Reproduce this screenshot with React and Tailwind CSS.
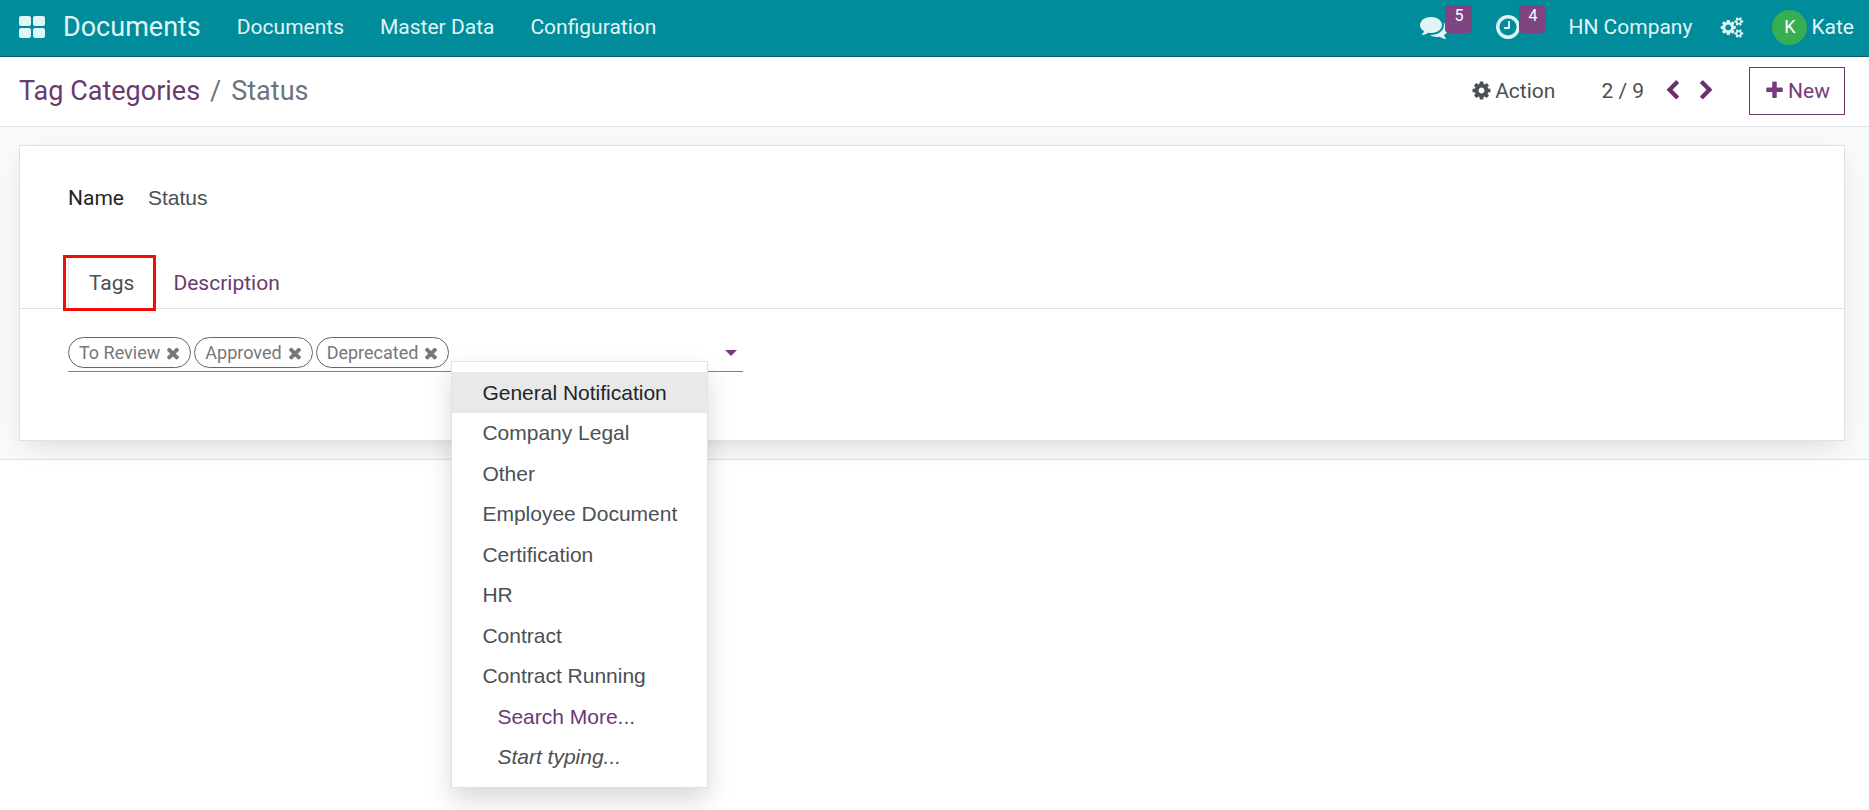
import { useState } from 'react';

const ICONS = {
  cog: 'M1152 896q0-106-75-181t-181-75-181 75-75 181 75 181 181 75 181-75 75-181zm512-109v222q0 12-8 23t-20 13l-185 28q-19 54-39 91 35 50 107 138 10 12 10 25t-9 23q-27 37-99 108t-94 71q-12 0-26-9l-138-108q-44 23-91 38-16 136-29 186-7 28-36 28h-222q-14 0-24.5-8.5t-11.5-21.5l-28-184q-49-16-90-37l-141 107q-10 9-25 9-14 0-25-11-126-114-165-168-7-10-7-23 0-12 8-23 15-21 51-66.5t54-70.5q-27-50-41-99l-183-27q-13-2-21-12.5t-8-23.5v-222q0-12 8-23t19-13l186-28q14-46 39-92-40-57-107-138-10-12-10-24 0-10 9-23 26-36 98.5-107.5t94.5-71.5q13 0 26 10l138 107q44-23 91-38 16-136 29-186 7-28 36-28h222q14 0 24.5 8.5t11.5 21.5l28 184q49 16 90 37l142-107q9-9 24-9 13 0 25 10 129 119 165 170 7 8 7 22 0 12-8 23-15 21-51 66.5t-54 70.5q26 50 41 98l183 28q13 2 21 12.5t8 23.5z',
  cogs: 'M896 896q0-106-75-181t-181-75-181 75-75 181 75 181 181 75 181-75 75-181zm768 512q0-52-38-90t-90-38-90 38-38 90q0 53 37.5 90.5t90.5 37.5 90.5-37.5 37.5-90.5zm0-1024q0-52-38-90t-90-38-90 38-38 90q0 53 37.5 90.5t90.5 37.5 90.5-37.5 37.5-90.5zm-384 421v185q0 10-7 19.5t-16 10.5l-155 24q-11 35-32 76 34 48 90 115 7 11 7 20 0 12-7 19-23 30-82.5 89.5t-78.5 59.5q-11 0-21-7l-115-90q-37 19-77 31-11 108-23 155-7 24-30 24h-186q-11 0-20-7.5t-10-17.5l-23-153q-34-10-75-31l-118 89q-7 7-20 7-11 0-21-8-144-133-144-160 0-9 7-19 10-14 41-53t47-61q-23-44-35-82l-152-24q-10-1-17-9.5t-7-19.5v-185q0-10 7-19.5t16-10.5l155-24q11-35 32-76-34-48-90-115-7-11-7-20 0-12 7-20 22-30 82-89t79-59q11 0 21 7l115 90q34-18 77-32 11-108 23-154 7-24 30-24h186q11 0 20 7.5t10 17.5l23 153q34 10 75 31l118-89q8-7 20-7 11 0 21 8 144 133 144 160 0 8-7 19-12 16-42 54t-45 60q23 48 34 82l152 23q10 2 17 10.5t7 19.5zm640 533v140q0 16-149 31-12 27-30 52 51 113 51 138 0 4-4 7-122 71-124 71-8 0-46-47t-52-68q-20 2-30 2t-30-2q-14 21-52 68t-46 47q-2 0-124-71-4-3-4-7 0-25 51-138-18-25-30-52-149-15-149-31v-140q0-16 149-31 13-29 30-52-51-113-51-138 0-4 4-7 4-2 35-20t59-34 30-16q8 0 46 46.5t52 67.5q20-2 30-2t30 2q51-71 92-112l6-2q4 0 124 70 4 3 4 7 0 25-51 138 17 23 30 52 149 15 149 31zm0-1024v140q0 16-149 31-12 27-30 52 51 113 51 138 0 4-4 7-122 71-124 71-8 0-46-47t-52-68q-20 2-30 2t-30-2q-14 21-52 68t-46 47q-2 0-124-71-4-3-4-7 0-25 51-138-18-25-30-52-149-15-149-31v-140q0-16 149-31 13-29 30-52-51-113-51-138 0-4 4-7 4-2 35-20t59-34 30-16q8 0 46 46.5t52 67.5q20-2 30-2t30 2q51-71 92-112l6-2q4 0 124 70 4 3 4 7 0 25-51 138 17 23 30 52 149 15 149 31z',
  plus: 'M1600 736v192q0 40-28 68t-68 28h-416v416q0 40-28 68t-68 28h-192q-40 0-68-28t-28-68v-416h-416q-40 0-68-28t-28-68v-192q0-40 28-68t68-28h416v-416q0-40 28-68t68-28h192q40 0 68 28t28 68v416h416q40 0 68 28t28 68z',
  times: 'M1490 1322q0 40-28 68l-136 136q-28 28-68 28t-68-28l-294-294-294 294q-28 28-68 28t-68-28l-136-136q-28-28-28-68t28-68l294-294-294-294q-28-28-28-68t28-68l136-136q28-28 68-28t68 28l294 294 294-294q28-28 68-28t68 28l136 136q28 28 28 68t-28 68l-294 294 294 294q28 28 28 68z',
  left: 'M1427 301l-531 531 531 531q19 19 19 45t-19 45l-166 166q-19 19-45 19t-45-19l-742-742q-19-19-19-45t19-45l742-742q19-19 45-19t45 19l166 166q19 19 19 45t-19 45z',
  right: 'M1363 877l-742 742q-19 19-45 19t-45-19l-166-166q-19-19-19-45t19-45l531-531-531-531q-19-19-19-45t19-45l166-166q19-19 45-19t45 19l742 742q19 19 19 45t-19 45z',
  comments: 'M1408 768q0 139-94 257t-256.5 186.5-353.5 68.5q-86 0-176-16-124 88-278 128-36 9-86 16h-3q-11 0-20.5-8t-11.5-21q-1-3-1-6.5t.5-6.5 2-6l2.5-5 3.5-5.5 4-5 4.5-5 4-4.5q5-6 23-25t26-29.5 22.5-29 25-38.5 20.5-44q-124-72-195-177t-71-224q0-139 94-257t256.5-186.5 353.5-68.5 353.5 68.5 256.5 186.5 94 257zm384 256q0 120-71 224.5t-195 176.5q10 24 20.5 44t25 38.5 22.5 29 26 29.5 23 25q1 1 4 4.5t4.5 5 4 5 3.5 5.5l2.5 5 2 6 .5 6.5-1 6.5q-3 14-13 22t-22 7q-50-7-86-16-154-40-278-128-90 16-176 16-271 0-472-132 58 4 88 4 161 0 309-45t264-129q125-92 192-212t67-254q0-77-23-152 129 71 204 178t75 230z',
  clock: 'M1024 544v448q0 14-9 23t-23 9h-320q-14 0-23-9t-9-23v-64q0-14 9-23t23-9h224v-352q0-14 9-23t23-9h64q14 0 23 9t9 23zm416 352q0-148-73-273t-198-198-273-73-273 73-198 198-73 273 73 273 198 198 273 73 273-73 198-198 73-273zm224 0q0 209-103 385.5t-279.5 279.5-385.5 103-385.5-103-279.5-279.5-103-385.5 103-385.5 279.5-279.5 385.5-103 385.5 103 279.5 279.5 103 385.5z',
};

const MENUS = ['Documents', 'Master Data', 'Configuration'];

const OPTIONS = [
  'General Notification',
  'Company Legal',
  'Other',
  'Employee Document',
  'Certification',
  'HR',
  'Contract',
  'Contract Running',
];

function Icon({ name, viewBox = '0 0 1792 1792', className }) {
  return (
    <svg viewBox={viewBox} className={className} fill="currentColor" aria-hidden="true">
      <path d={ICONS[name]} />
    </svg>
  );
}

function Systray({ icon, count, label }) {
  return (
    <button aria-label={label} className="relative flex h-8 w-7 items-center">
      <Icon name={icon} className="h-7 w-7" />
      <span className="absolute -top-[6px] left-[25px] flex h-7 w-[27px] items-center justify-center rounded-sm bg-[#7e4582] pb-[6px] text-base leading-5 text-white">
        {count}
      </span>
    </button>
  );
}

function Navbar() {
  return (
    <header className="flex h-[57px] items-center border-b border-[#0b5f69] bg-[#008c9b] pr-[15px] pb-[2px] pl-[19px] text-[#e0f5f6]">
      <button aria-label="Apps" className="shrink-0">
        <svg viewBox="0 0 26 22" className="h-[22px] w-[26px]" fill="currentColor">
          <rect width="12" height="10" rx="2" />
          <rect x="14" width="12" height="10" rx="2" />
          <rect y="12" width="12" height="10" rx="2" />
          <rect x="14" y="12" width="12" height="10" rx="2" />
        </svg>
      </button>
      <a href="#home" className="ml-[18px] text-[27px] leading-8">Documents</a>
      <nav className="ml-[18px] flex">
        {MENUS.map((menu) => (
          <a key={menu} href="#menu" className="px-[18px] leading-8">{menu}</a>
        ))}
      </nav>
      <div className="ml-auto flex items-center">
        <Systray icon="comments" count="5" label="Messages" />
        <div className="ml-[46px]">
          <Systray icon="clock" count="4" label="Activities" />
        </div>
        <button className="ml-[46px] leading-8">HN Company</button>
        <button aria-label="Settings" className="ml-7">
          <Icon name="cogs" viewBox="0 0 1920 1792" className="h-[21px] w-6" />
        </button>
        <button className="ml-7 flex items-center gap-1 leading-8">
          <span className="flex h-[35px] w-[35px] items-center justify-center rounded-full bg-[#37ad54] text-lg text-white">K</span>
          Kate
        </button>
      </div>
    </header>
  );
}

function ControlPanel() {
  return (
    <div className="flex h-[70px] items-center border-b border-[#dee2e6] bg-white pr-6 pb-[2px] pl-[19px] text-[#495057]">
      <ol className="flex text-[27px] leading-8">
        <li><a href="#categories" className="text-[#6b3a6e]">Tag Categories</a></li>
        <li className="px-[10px] text-[#6c757d]">/</li>
        <li className="text-[#6c757d]">Status</li>
      </ol>
      <div className="ml-auto flex items-center leading-8">
        <button className="flex items-center gap-[3px]">
          <Icon name="cog" className="h-[21px] w-[21px]" />
          Action
        </button>
        <span className="ml-[46px]">2 / 9</span>
        <button aria-label="Previous" className="ml-[18px] text-[#6b2f6c]">
          <Icon name="left" className="h-[21px] w-[21px]" />
        </button>
        <button aria-label="Next" className="ml-[13px] text-[#6b2f6c]">
          <Icon name="right" className="h-[21px] w-[21px]" />
        </button>
        <button className="ml-8 flex h-12 items-center gap-[3px] border border-[#6b3a6e] px-[14px] text-[#773a7b]">
          <Icon name="plus" className="h-[21px] w-[21px]" />
          New
        </button>
      </div>
    </div>
  );
}

function TagsField() {
  const [tags, setTags] = useState(['To Review', 'Approved', 'Deprecated']);
  const [query, setQuery] = useState('');

  return (
    <div className="flex w-full max-w-[675px] gap-[3px] border-b border-[#2f9fae] pb-[2px]">
      {tags.map((tag) => (
        <span key={tag} className="flex h-[31px] shrink-0 items-center gap-1 rounded-full border border-[#666] pr-2 pl-[10px] text-lg leading-6 text-[#777]">
          {tag}
          <button aria-label={`Remove ${tag}`} onClick={() => setTags(tags.filter((t) => t !== tag))}>
            <Icon name="times" className="h-[18px] w-[18px]" />
          </button>
        </span>
      ))}
      <div className="relative flex grow items-center">
        <input
          aria-label="Tags"
          value={query}
          onChange={(e) => setQuery(e.target.value)}
          className="w-full bg-transparent font-['Liberation_Sans',sans-serif] outline-none"
        />
        <svg viewBox="0 0 12 6" className="mr-[6px] h-[6px] w-3 shrink-0 text-[#773a7b]" fill="currentColor">
          <path d="M0 0h12l-6 6z" />
        </svg>
        <ul className="absolute top-6 -left-px z-10 w-[257px] border border-[#dee2e6] bg-white py-[10px] font-['Liberation_Sans',sans-serif] text-[#4c5055] shadow-[0_12px_24px_rgba(0,0,0,0.15)]">
          {OPTIONS.map((option, i) => (
            <li key={option} className="odd:h-[41px] even:h-10">
              <button className={`h-full w-full px-[30px] text-left whitespace-nowrap ${i === 0 ? 'bg-[#e9e9e9] text-[#212529]' : ''}`}>
                {option}
              </button>
            </li>
          ))}
          <li className="odd:h-[41px] even:h-10">
            <button className="h-full w-full px-[45px] text-left whitespace-nowrap text-[#6b3a6e]">Search More...</button>
          </li>
          <li className="flex items-center px-[45px] whitespace-nowrap italic odd:h-[41px] even:h-10">Start typing...</li>
        </ul>
      </div>
    </div>
  );
}

export default function App() {
  return (
    <div className="min-h-screen bg-white font-[Roboto,sans-serif] text-[21px] leading-8">
      <Navbar />
      <ControlPanel />
      <main className="border-b border-[#dee2e6] bg-[#f8f9fa] pt-[18px] pr-6 pb-[18px] pl-[19px]">
        <div className="border border-[#dee2e6] bg-white pt-9 pb-[68px] shadow-[0_10px_24px_-6px_rgba(0,0,0,0.12)]">
          <div className="flex items-center gap-6 px-12">
            <label htmlFor="name" className="text-[#212529]">Name</label>
            <input
              id="name"
              defaultValue="Status"
              className="w-80 font-['Liberation_Sans',sans-serif] text-[#495057] outline-none"
            />
          </div>
          <div role="tablist" className="mt-[43px] flex border-b border-[#dee2e6] px-12">
            <button role="tab" aria-selected="true" className="relative border-x border-t border-[#dee2e6] px-5 py-[9px] text-[#495057]">
              Tags
              <span className="absolute -inset-y-[3px] -right-[2px] -left-[6px] border-[3px] border-[#f20d08]" />
            </button>
            <button role="tab" aria-selected="false" className="px-[18px] py-[9px] text-[#6b3a6e]">Description</button>
          </div>
          <div className="px-12 pt-7">
            <TagsField />
          </div>
        </div>
      </main>
    </div>
  );
}
